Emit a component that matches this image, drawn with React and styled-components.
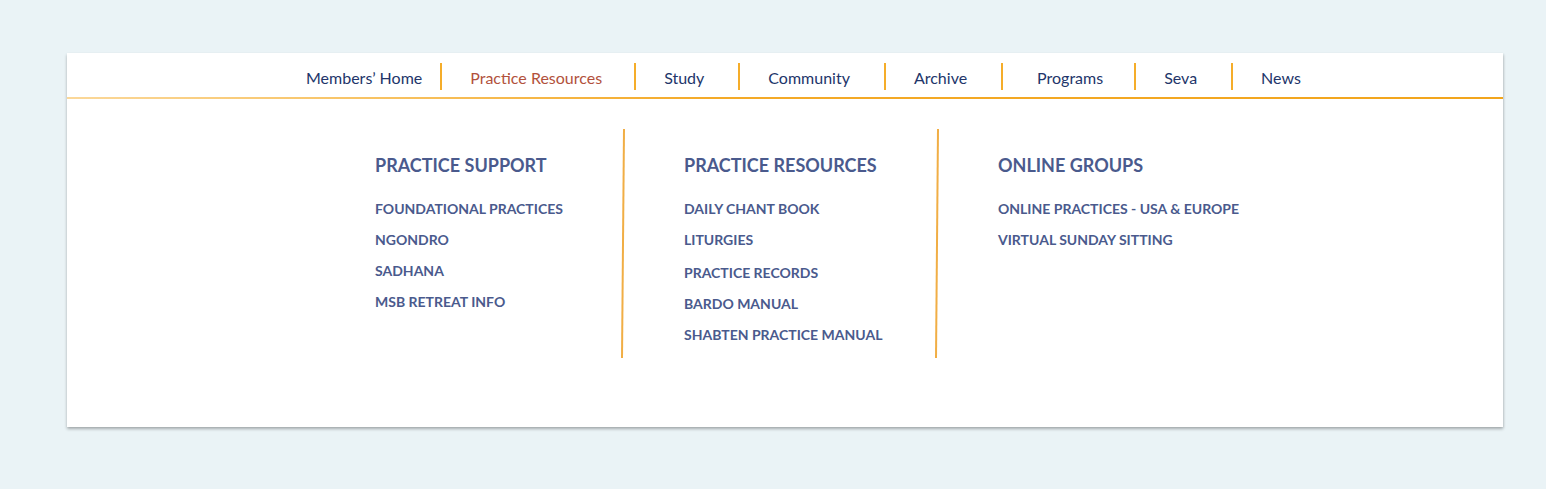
import React from 'react';
import styled, { createGlobalStyle } from 'styled-components';

const GlobalStyle = createGlobalStyle`
  html, body {
    margin: 0;
    padding: 0;
    background: #eaf3f6;
    font-family: Lato, "Open Sans", Arial, sans-serif;
  }
`;

const Page = styled.div`
  padding: 53px 43px 62px 67px;
`;

const Card = styled.div`
  width: 1436px;
  height: 374px;
  background: #fff;
  box-shadow: 0 2px 3px rgba(0, 0, 0, 0.28), 1px 1px 2px rgba(0, 0, 0, 0.06);
  display: flex;
  flex-direction: column;
`;

const Nav = styled.nav`
  height: 44px;
  display: flex;
  align-items: flex-start;
  padding: 10px 0 0 239px;
  box-sizing: border-box;
`;

const NavRule = styled.div`
  height: 2px;
  background: linear-gradient(90deg, #fbd89a 0%, #f8c466 20%, #f4aa28 45%, #f2a51c 100%);
`;

const NavItem = styled.a`
  height: 27px;
  box-sizing: border-box;
  padding: 3px ${p => p.$padRight}px 0 ${p => p.$padLeft}px;
  font-size: 16px;
  line-height: 23px;
  color: ${p => (p.$active ? '#b2513c' : '#22356a')};
  border-left: ${p => (p.$first ? 'none' : '2px solid #f5ad2a')};
  text-decoration: none;
  white-space: nowrap;
`;

const Panel = styled.div`
  flex: 1;
  display: flex;
  justify-content: center;
  padding-top: 30px;
`;

const Columns = styled.div`
  display: grid;
  grid-template-columns: 309px 314px 319px;
  height: 229px;
`;

const Column = styled.div`
  position: relative;
  padding-left: 61px;

  &::before {
    content: '';
    display: ${p => (p.$divider ? 'block' : 'none')};
    position: absolute;
    left: -1px;
    top: 0;
    width: 1.5px;
    height: 100%;
    background: #f1ae45;
    transform: rotate(0.5deg);
  }
`;

const Heading = styled.h3`
  margin: 25px 0 17px;
  font-size: 18px;
  line-height: 22px;
  font-weight: 700;
  color: #4a5a8d;
  white-space: nowrap;
`;

const LinkList = styled.ul`
  list-style: none;
  margin: 0;
  padding: 0;
`;

const MenuLink = styled.li`
  font-size: 14px;
  line-height: 31px;
  margin-top: ${p => p.$extra || 0}px;
  font-weight: 700;
  color: #4a5a8d;
  white-space: nowrap;
`;

const navItems = [
  { label: 'Members’ Home', left: 0, right: 18 },
  { label: 'Practice Resources', left: 28, right: 32, active: true },
  { label: 'Study', left: 28, right: 34 },
  { label: 'Community', left: 28, right: 34 },
  { label: 'Archive', left: 28, right: 34 },
  { label: 'Programs', left: 34, right: 31 },
  { label: 'Seva', left: 28, right: 34 },
  { label: 'News', left: 28, right: 34 },
];

const columns = [
  {
    title: 'PRACTICE SUPPORT',
    links: ['FOUNDATIONAL PRACTICES', 'NGONDRO', 'SADHANA', 'MSB RETREAT INFO'],
  },
  {
    title: 'PRACTICE RESOURCES',
    links: ['DAILY CHANT BOOK', 'LITURGIES', 'PRACTICE RECORDS', 'BARDO MANUAL', 'SHABTEN PRACTICE MANUAL'],
  },
  {
    title: 'ONLINE GROUPS',
    links: ['ONLINE PRACTICES - USA & EUROPE', 'VIRTUAL SUNDAY SITTING'],
  },
];

export default function App() {
  return (
    <>
      <GlobalStyle />
      <Page>
        <Card>
          <Nav>
            {navItems.map((item, i) => (
              <NavItem
                key={item.label}
                href="#"
                $first={i === 0}
                $active={item.active}
                $padLeft={item.left}
                $padRight={item.right}
              >
                {item.label}
              </NavItem>
            ))}
          </Nav>
          <NavRule />
          <Panel>
            <Columns>
              {columns.map((col, i) => (
                <Column key={col.title} $divider={i > 0}>
                  <Heading>{col.title}</Heading>
                  <LinkList>
                    {col.links.map(link => (
                      <MenuLink key={link} $extra={link === 'PRACTICE RECORDS' ? 2 : 0}>
                        {link}
                      </MenuLink>
                    ))}
                  </LinkList>
                </Column>
              ))}
            </Columns>
          </Panel>
        </Card>
      </Page>
    </>
  );
}
